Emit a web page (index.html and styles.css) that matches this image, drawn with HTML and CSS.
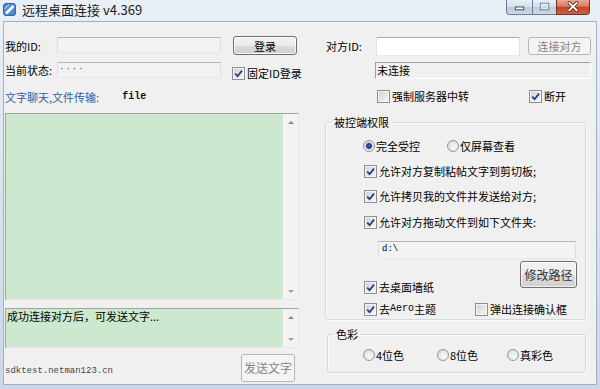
FILE: index.html
```html
<!DOCTYPE html>
<html lang="zh">
<head>
<meta charset="utf-8">
<title>远程桌面连接</title>
<link rel="stylesheet" href="styles.css">
</head>
<body>
<div class="window">
  <div class="titlebar">
    <svg class="app-icon" viewBox="0 0 13 13"><rect x="0.5" y="0.5" width="12" height="12" rx="2.5" fill="#4d8ad6" stroke="#2f62a8"/><path d="M3 10.5 L10.5 3" stroke="#fff" stroke-width="2.6"/><path d="M1.5 6 L6 1.5" stroke="#9cc3ee" stroke-width="1.2"/></svg>
    <span class="title">远程桌面连接 v4.369</span>
    <div class="caption">
      <span class="cap cap-min"><svg viewBox="0 0 26 15"><rect x="8.5" y="7.5" width="9" height="3" fill="#fff" stroke="#3b4452"/></svg></span>
      <span class="cap cap-max"><svg viewBox="0 0 24 15"><rect x="7.5" y="3.5" width="9" height="7" fill="none" stroke="#5d6a7c"/><rect x="8.5" y="4.5" width="7" height="5" fill="none" stroke="#e8eef5"/></svg></span>
      <span class="cap cap-close"><svg viewBox="0 0 34 15"><path d="M13 3 L21 11 M21 3 L13 11" stroke="#5a2118" stroke-width="3.6" stroke-linecap="round"/><path d="M13 3 L21 11 M21 3 L13 11" stroke="#fff" stroke-width="2" stroke-linecap="round"/></svg></span>
    </div>
  </div>

  <div class="client">
    <div class="left">
      <div class="row r1">
        <span class="lbl lbl-left">我的ID:</span>
        <span class="edit ro edit-id"></span>
        <span class="btn btn-login">登录</span>
      </div>
      <div class="row r2">
        <span class="lbl lbl-left">当前状态:</span>
        <span class="edit ro edit-state">····</span>
        <label class="cb cb-fixed"><span class="box"><svg viewBox="0 0 9 9"><path d="M1.2 4.6 L3.6 7.2 L8 1.6" fill="none" stroke="#243e86" stroke-width="1.8"/></svg></span>固定ID登录</label>
      </div>
      <div class="row r3">
        <span class="blue">文字聊天,文件传输:</span>
        <span class="file">file</span>
      </div>
      <div class="memo memo-big">
        <div class="memo-text"></div>
        <div class="vscroll"><span class="arr up"></span><span class="arr down"></span></div>
      </div>
      <div class="memo memo-small">
        <div class="memo-text">成功连接对方后，可发送文字...</div>
        <div class="vscroll"><span class="arr up"></span><span class="arr down"></span></div>
      </div>
      <div class="row bottom">
        <span class="site">sdktest.netman123.cn</span>
        <span class="btn dis btn-send">发送文字</span>
      </div>
    </div>

    <div class="right">
      <div class="row r1">
        <span class="lbl lbl-peer">对方ID:</span>
        <span class="edit edit-peer"></span>
        <span class="btn dis btn-connect">连接对方</span>
      </div>
      <div class="status">未连接</div>
      <div class="row r3r">
        <label class="cb cb-relay"><span class="box"></span>强制服务器中转</label>
        <label class="cb cb-disc"><span class="box"><svg viewBox="0 0 9 9"><path d="M1.2 4.6 L3.6 7.2 L8 1.6" fill="none" stroke="#243e86" stroke-width="1.8"/></svg></span>断开</label>
      </div>

      <fieldset class="group group-perm">
        <legend>被控端权限</legend>
        <div class="group-body perm-body">
          <div class="row radios">
            <label class="rb rb-full"><span class="rd on"></span>完全受控</label>
            <label class="rb rb-view"><span class="rd"></span>仅屏幕查看</label>
          </div>
          <label class="cb row-cb cb1"><span class="box"><svg viewBox="0 0 9 9"><path d="M1.2 4.6 L3.6 7.2 L8 1.6" fill="none" stroke="#243e86" stroke-width="1.8"/></svg></span>允许对方复制粘帖文字到剪切板;</label>
          <label class="cb row-cb cb2"><span class="box"><svg viewBox="0 0 9 9"><path d="M1.2 4.6 L3.6 7.2 L8 1.6" fill="none" stroke="#243e86" stroke-width="1.8"/></svg></span>允许拷贝我的文件并发送给对方;</label>
          <label class="cb row-cb cb3"><span class="box"><svg viewBox="0 0 9 9"><path d="M1.2 4.6 L3.6 7.2 L8 1.6" fill="none" stroke="#243e86" stroke-width="1.8"/></svg></span>允许对方拖动文件到如下文件夹:</label>
          <div class="edit ro path">d:\</div>
          <div class="row wall">
            <label class="cb"><span class="box"><svg viewBox="0 0 9 9"><path d="M1.2 4.6 L3.6 7.2 L8 1.6" fill="none" stroke="#243e86" stroke-width="1.8"/></svg></span>去桌面墙纸</label>
            <span class="btn btn-path">修改路径</span>
          </div>
          <div class="row last">
            <label class="cb cb-aero"><span class="box"><svg viewBox="0 0 9 9"><path d="M1.2 4.6 L3.6 7.2 L8 1.6" fill="none" stroke="#243e86" stroke-width="1.8"/></svg></span>去<span class="ascii">Aero</span>主题</label>
            <label class="cb cb-confirm"><span class="box"></span>弹出连接确认框</label>
          </div>
        </div>
      </fieldset>

      <fieldset class="group group-color">
        <legend>色彩</legend>
        <div class="group-body color-body">
          <div class="row radios">
            <label class="rb rb-4"><span class="rd"></span>4位色</label>
            <label class="rb rb-8"><span class="rd"></span>8位色</label>
            <label class="rb"><span class="rd"></span>真彩色</label>
          </div>
        </div>
      </fieldset>
    </div>
  </div>
</div>
</body>
</html>
```

FILE: styles.css
```css
* { box-sizing: border-box; }

body {
  margin: 0;
  font-family: "Noto Sans CJK SC", "Liberation Sans", sans-serif;
  font-size: 11px;
  color: #000;
}

.window {
  width: 600px;
  height: 389px;
  overflow: hidden;
  display: flex;
  flex-direction: column;
  background: linear-gradient(180deg, #e9eff7 0%, #dce6f1 40%, #c9d7e7 100%);
}

/* title bar */
.titlebar {
  flex: none;
  height: 21px;
  display: flex;
  align-items: flex-start;
  padding-left: 3px;
}
.app-icon { width: 13px; height: 13px; margin-top: 3px; flex: none; }
.title {
  margin-left: 6px;
  font-size: 13px;
  line-height: 20px;
  color: #1b1b1b;
}
.caption {
  margin-left: auto;
  margin-right: 10px;
  display: flex;
  height: 15px;
}
.cap {
  height: 15px;
  display: block;
  border: 1px solid #707d90;
  border-top: none;
}
.cap svg { display: block; width: 100%; height: 100%; }
.cap-min {
  width: 26px;
  border-bottom-left-radius: 4px;
  border-right: none;
  background: linear-gradient(180deg, #e9eff6 0%, #d4dfeb 50%, #bccbdc 51%, #c9d7e6 100%);
}
.cap-max {
  width: 24px;
  border-right: none;
  background: linear-gradient(180deg, #e9eff6 0%, #d4dfeb 50%, #bccbdc 51%, #c9d7e6 100%);
}
.cap-close {
  width: 34px;
  border-color: #7a2f22;
  border-bottom-right-radius: 4px;
  background: linear-gradient(180deg, #e9a996 0%, #d97a62 45%, #c3442b 52%, #d0603f 100%);
}

/* client area */
.client {
  flex: none;
  height: 364px;
  margin: 0 3px;
  border: 1px solid #a3b1c2;
  background: #f0f0f0;
  display: flex;
}

.row { display: flex; }
.lbl { line-height: 14px; flex: none; }

.left {
  width: 294px;
  margin-left: 1px;
  display: flex;
  flex-direction: column;
}
.right {
  width: 266px;
  margin-left: 26px;
  display: flex;
  flex-direction: column;
}

/* edit boxes */
.edit {
  display: block;
  border: 1px solid;
  border-color: #abadb3 #dbdfe6 #e3e9ef #e2e3ea;
  background: #fff;
  flex: none;
}
.edit.ro {
  background: #f3f3f3;
  border-color: #b4b6ba #dcdee1 #e6e8ea #dcdee1;
}

/* buttons */
.btn {
  display: flex;
  align-items: center;
  justify-content: center;
  flex: none;
  border: 1px solid #707070;
  border-radius: 3px;
  background: linear-gradient(180deg, #f2f2f2 0%, #ebebeb 50%, #dddddd 51%, #cfcfcf 100%);
  box-shadow: inset 0 0 0 1px rgba(255, 255, 255, 0.75);
  color: #000;
  line-height: 14px;
}
.btn.dis {
  border-color: #b3b7ba;
  background: #f4f4f4;
  box-shadow: none;
  color: #848484;
}

/* checkbox / radio */
.cb, .rb {
  display: flex;
  align-items: center;
  height: 14px;
  line-height: 14px;
  white-space: nowrap;
  flex: none;
}
.box {
  width: 13px;
  height: 13px;
  flex: none;
  margin-right: 2px;
  border: 1px solid #8e8f8f;
  background: linear-gradient(135deg, #cbcfd6 0%, #e7e9ec 60%, #f7f7f7 100%);
  box-shadow: inset 0 0 0 1px #f4f4f4;
  display: flex;
  align-items: center;
  justify-content: center;
}
.box svg { width: 9px; height: 9px; display: block; }
.rd {
  width: 12px;
  height: 12px;
  flex: none;
  margin-right: 1px;
  border-radius: 50%;
  border: 1px solid #949698;
  background: radial-gradient(circle at 60% 65%, #fbfbfb 0%, #e4e6e9 55%, #c9cdd3 100%);
}
.rd.on {
  background:
    radial-gradient(circle at 50% 50%, #3e64b0 0, #1f3c7f 2.4px, #8fa6d2 3.2px, rgba(255,255,255,0) 3.8px),
    radial-gradient(circle at 60% 65%, #fbfbfb 0%, #e4e6e9 55%, #c9cdd3 100%);
}

/* left column */
.left .r1 { margin-top: 14px; height: 20px; align-items: flex-start; }
.lbl-left { width: 52px; margin-top: 3px; }
.edit-id { width: 164px; height: 16px; margin-top: 1px; }
.btn-login { width: 64px; height: 19px; margin-left: 12px; }

.r2 { margin-top: 6px; height: 18px; align-items: flex-start; }
.r2 .lbl { margin-top: 1px; }
.edit-state {
  width: 164px;
  height: 16px;
  font-family: "Liberation Mono", monospace;
  font-size: 9px;
  line-height: 12px;
  color: #555;
  padding-left: 1px;
  letter-spacing: 1px;
}
.cb-fixed { margin-left: 11px; margin-top: 4px; }

.r3 { margin-top: 10px; height: 14px; line-height: 14px; }
.blue { color: #2f5da6; }
.file {
  margin-left: 23px;
  font-family: "Liberation Mono", monospace;
  font-weight: bold;
  font-size: 10px;
  color: #111;
}

.memo {
  display: flex;
  flex: none;
  border: 1px solid;
  border-color: #a3a3a3 #e6e6e6 #e6e6e6 #a3a3a3;
}
.memo-big { margin-top: 9px; height: 187px; }
.memo-small { margin-top: 8px; height: 40px; }
.memo-text {
  flex: 1;
  background: #cce8cf;
  line-height: 12px;
  padding: 1px 0 0 1px;
}
.vscroll {
  width: 15px;
  flex: none;
  background: #f3f3f3;
  border-left: 1px solid #fbfbfb;
  display: flex;
  flex-direction: column;
  justify-content: space-between;
  align-items: center;
  padding: 7px 0 6px;
}
.arr {
  width: 0;
  height: 0;
  border-left: 3px solid transparent;
  border-right: 3px solid transparent;
}
.arr.up { border-bottom: 3px solid #8a8a8a; }
.arr.down { border-top: 3px solid #a0a0a0; }

.bottom { margin-top: 6px; height: 28px; align-items: flex-start; }
.site {
  margin-top: 10px;
  line-height: 14px;
  font-family: "Liberation Mono", monospace;
  font-size: 9px;
  color: #444;
}
.btn-send { width: 54px; height: 28px; margin-left: auto; margin-right: 4px; font-size: 12px; }

/* right column */
.right .r1 { margin-top: 14px; height: 20px; align-items: flex-start; }
.lbl-peer { width: 50px; margin-left: 1px; margin-top: 3px; }
.edit-peer { width: 144px; height: 19px; margin-top: 1px; }
.btn-connect { width: 63px; height: 18px; margin-left: 8px; margin-top: 1px; }

.status {
  margin-top: 6px;
  margin-left: 50px;
  width: 216px;
  height: 17px;
  line-height: 14px;
  padding-left: 1px;
  border: 1px solid;
  border-color: #a0a0a0 #ffffff #ffffff #a0a0a0;
  background: #f0f0f0;
}

.r3r { margin-top: 10px; height: 14px; }
.cb-relay { margin-left: 52px; }
.cb-disc { margin-left: auto; margin-right: 25px; }

.group {
  margin: 0;
  padding: 0;
  border: 1px solid #d3dbe2;
  border-radius: 3px;
  box-shadow: inset 1px 1px 0 #fbfbfb, 1px 1px 0 #fbfbfb;
  min-width: 0;
}
.group legend {
  padding: 0 2px;
  margin-left: 6px;
  line-height: 14px;
}
.group-perm { margin-top: 12px; width: 261px; }
.group-color { margin-top: 7px; margin-left: 2px; width: 259px; }

.perm-body {
  padding-left: 38px;
  padding-bottom: 3px;
  display: flex;
  flex-direction: column;
  align-items: flex-start;
}
.perm-body .radios { margin-top: 10px; margin-left: -1px; height: 14px; }
.rb-full { width: 84px; }
.cb1 { margin-top: 11px; }
.cb2 { margin-top: 11px; }
.cb3 { margin-top: 12px; }
.path {
  margin-top: 12px;
  margin-left: 14px;
  width: 198px;
  height: 18px;
  font-family: "Liberation Mono", monospace;
  font-size: 9px;
  line-height: 15px;
  padding-left: 3px;
  background: #f2f2f2;
}
.wall {
  margin-top: 2px;
  height: 33px;
  width: 100%;
  align-items: flex-end;
}
.btn-path {
  align-self: flex-start;
  width: 57px;
  height: 27px;
  margin-left: auto;
  margin-right: 8px;
  font-size: 12px;
  color: #333;
}
.last { margin-top: 8px; height: 14px; }
.cb-aero { width: 111px; }
.ascii { font-family: "Liberation Mono", monospace; font-size: 10px; }

.color-body {
  padding-left: 35px;
  padding-bottom: 10px;
}
.color-body .radios { margin-top: 7px; height: 14px; }
.rb-4 { width: 74px; }
.rb-8 { width: 70px; }
```
